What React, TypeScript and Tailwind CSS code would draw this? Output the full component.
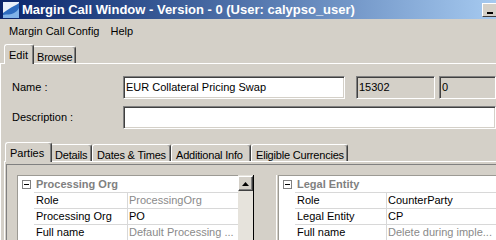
import React from "react";

const font = { fontFamily: '"Liberation Sans", Arial, sans-serif' };

function Tab({ label, selected, w }: { label: string; selected?: boolean; w: string }) {
  if (selected) {
    return (
      <div
        className={`relative z-10 -mb-px -mr-[2px] flex h-[20px] shrink-0 items-start whitespace-nowrap rounded-t-[3px] border-l border-t border-r border-l-white border-t-white border-r-[#404040] bg-[#d4d0c8] pl-[4px] pt-[2px] text-[11px] text-black shadow-[inset_-1px_0_0_#808080] ${w}`}
      >
        {label}
      </div>
    );
  }
  return (
    <div
      className={`flex h-[17px] shrink-0 items-start whitespace-nowrap rounded-t-[3px] border-l border-t border-r border-l-white border-t-white border-r-[#404040] pl-[4px] pt-[2px] text-[11px] tracking-[-0.2px] text-black shadow-[inset_-1px_0_0_#808080] ${w}`}
    >
      {label}
    </div>
  );
}

function SunkenBox({ className, children }: { className: string; children?: React.ReactNode }) {
  return (
    <div
      className={`flex items-center border border-t-[#808080] border-l-[#808080] border-b-white border-r-white pl-[2px] text-[11px] shadow-[inset_1px_1px_0_#404040,inset_-1px_-1px_0_#d4d0c8] ${className}`}
    >
      {children}
    </div>
  );
}

type Row = { k: string; v: string; dim?: boolean };

function PropGrid({ title, rows, labelW, className }: { title: string; rows: Row[]; labelW: string; className: string }) {
  return (
    <div className={`flex flex-col border-l border-t border-[#9c9a94] bg-white text-[11px] ${className}`}>
      <div className="flex h-[16px] items-center pl-[4px]">
        <div className="flex h-[9px] w-[9px] items-center justify-center border border-[#808080] bg-white">
          <div className="h-px w-[5px] bg-black" />
        </div>
        <span className="ml-[5px] font-bold text-[#808080]">{title}</span>
      </div>
      {rows.map((r) => (
        <div key={r.k} className="flex h-[16px]">
          <div className="w-[16px] shrink-0" />
          <div className={`flex items-center border-r border-t border-[#d8d8d8] pl-[2px] text-black ${labelW}`}>{r.k}</div>
          <div
            className={`flex flex-1 items-center overflow-hidden whitespace-nowrap border-t border-[#d8d8d8] pl-[1px] ${
              r.dim ? "text-[#8a8a8a]" : "text-black"
            }`}
          >
            {r.v}
          </div>
        </div>
      ))}
    </div>
  );
}

export default function App() {
  return (
    <div className="flex h-[240px] w-[496px] flex-col overflow-hidden bg-[#d4d0c8] text-black" style={font}>
      {/* title bar */}
      <div className="flex h-[19px] shrink-0 items-center bg-gradient-to-r from-[#0a246a] to-[#a6caf0] pl-[3px]">
        <svg width="16" height="16" viewBox="0 0 16 16" className="shrink-0">
          <rect x="0" y="0" width="16" height="16" fill="#e8f0fa" />
          <path d="M0 16 L0 11 C4 8 7 6 11 4 C13 3 15 2 16 1 L16 16 Z" fill="#2d6cc0" />
          <path d="M0 16 L0 13 C4 12 8 13 11 11 C13 10 15 8 16 6 L16 16 Z" fill="#7fb2e8" />
        </svg>
        <span className="ml-[3px] text-[13px] font-bold whitespace-nowrap text-white">
          Margin Call Window - Version - 0 (User: calypso_user)
        </span>
        <div className="ml-auto -mr-[2px] flex h-[14px] w-[16px] shrink-0 items-end justify-center self-center border border-t-white border-l-white border-b-[#404040] border-r-[#404040] bg-[#d4d0c8] pb-[2px]">
          <div className="h-[2px] w-[6px] bg-black" />
        </div>
      </div>

      {/* menu bar */}
      <div className="flex h-[25px] shrink-0 items-center gap-[11px] pl-[9px] text-[11px]">
        <span>Margin Call Config</span>
        <span>Help</span>
      </div>

      {/* top tabs */}
      <div className="flex h-[20px] shrink-0 items-end border-b border-white pl-[4px]">
        <Tab label="Edit" selected w="w-[30px]" />
        <Tab label="Browse" w="w-[44px]" />
      </div>

      {/* edit panel */}
      <div className="flex flex-1 flex-col border-l border-white pl-[11px]">
        <div className="mt-[12px] flex h-[23px] items-center">
          <span className="w-[111px] text-[11px]">Name :</span>
          <SunkenBox className="h-[23px] w-[222px] bg-white">EUR Collateral Pricing Swap</SunkenBox>
          <SunkenBox className="ml-[11px] h-[23px] w-[79px] bg-[#d4d0c8]">15302</SunkenBox>
          <SunkenBox className="ml-[4px] h-[23px] flex-1 bg-[#d4d0c8]">0</SunkenBox>
        </div>
        <div className="mt-[7px] flex h-[23px] items-center">
          <span className="w-[111px] text-[11px]">Description :</span>
          <SunkenBox className="h-[23px] flex-1 bg-white" />
        </div>

        {/* lower tabs */}
        <div className="-ml-[8px] mt-[13px] flex h-[20px] shrink-0 items-end border-b border-white pl-[1px]">
          <Tab label="Parties" selected w="w-[47px]" />
          <Tab label="Details" w="w-[42px]" />
          <Tab label="Dates & Times" w="w-[79px]" />
          <Tab label="Additional Info" w="w-[80px]" />
          <Tab label="Eligible Currencies" w="w-[97px]" />
        </div>

        <div className="-ml-[8px] flex flex-1 flex-col border-l border-white pl-[1px] pt-[2px]">
          <div className="flex flex-1 border-l border-t border-[#808080] pl-[10px] pt-[10px]">
            <PropGrid
              title="Processing Org"
              labelW="w-[94px]"
              className="w-[221px]"
              rows={[
                { k: "Role", v: "ProcessingOrg", dim: true },
                { k: "Processing Org", v: "PO" },
                { k: "Full name", v: "Default Processing ...", dim: true },
              ]}
            />
            {/* scrollbar */}
            <div className="flex w-[16px] flex-col border-r border-black bg-[#e6e3dc] pt-px">
              <div className="flex h-[15px] w-[15px] items-center justify-center border border-t-white border-l-white border-b-[#404040] border-r-[#404040] bg-[#d4d0c8] shadow-[inset_-1px_-1px_0_#808080]">
                <svg width="7" height="4" viewBox="0 0 7 4">
                  <path d="M3.5 0 L7 4 L0 4 Z" fill="black" />
                </svg>
              </div>
            </div>
            <div className="ml-[22px] flex-1 border-l border-white pl-px">
              <PropGrid
                title="Legal Entity"
                labelW="w-[92px]"
                className="w-full"
                rows={[
                  { k: "Role", v: "CounterParty" },
                  { k: "Legal Entity", v: "CP" },
                  { k: "Full name", v: "Delete during imple...", dim: true },
                ]}
              />
            </div>
          </div>
        </div>
      </div>
    </div>
  );
}
